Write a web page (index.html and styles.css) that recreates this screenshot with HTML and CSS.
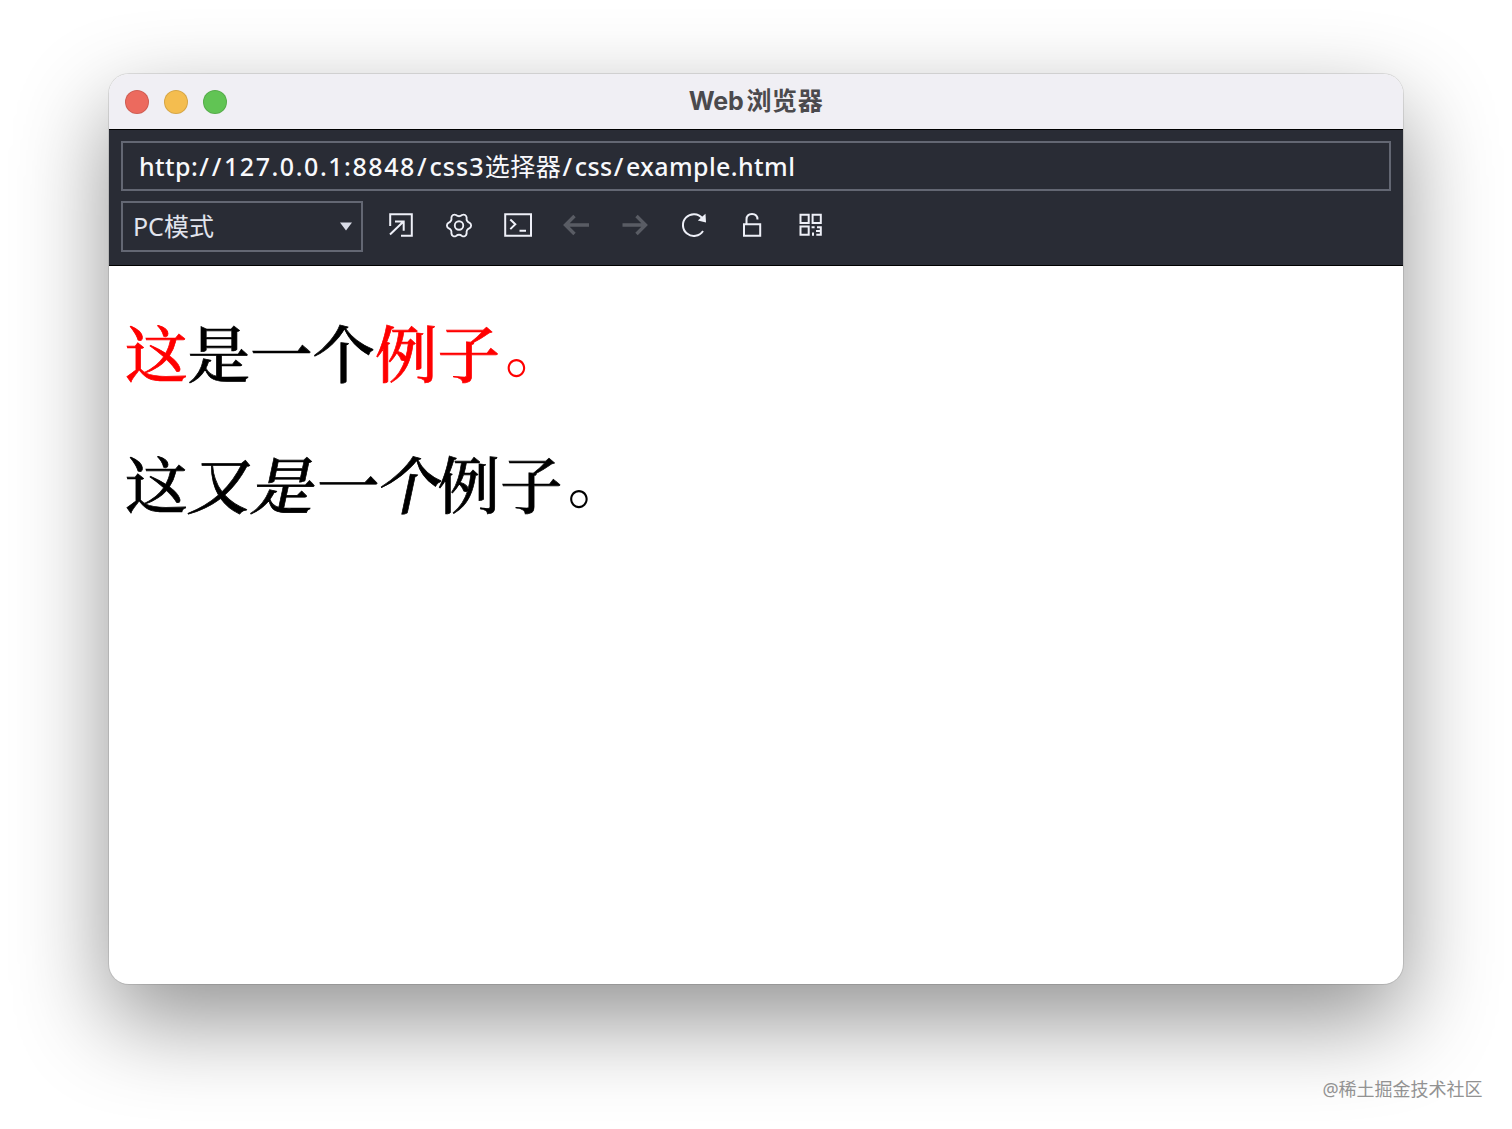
FILE: index.html
```html
<!DOCTYPE html>
<html lang="zh-CN">
<head>
<meta charset="utf-8">
<title>Web浏览器</title>
<link rel="stylesheet" href="styles.css">
</head>
<body>
<main class="window">
  <header class="titlebar">
    <div class="lights"><i class="light red"></i><i class="light yellow"></i><i class="light green"></i></div>
    <h1 class="title"><span class="latin">Web</span>浏览器</h1>
  </header>
  <section class="toolbar">
    <div class="address"><span class="url">http:</span><span class="slash">//</span><span class="digits">127.0.0.1:8848</span><span class="slash">/</span><span class="url host">css3</span><span class="url-cjk">选择器</span><span class="slash">/</span><span class="url">css</span><span class="slash">/</span><span class="url">example.html</span></div>
    <div class="controls">
      <div class="mode"><span class="mode-label">PC模式</span><svg class="caret" viewBox="0 0 12 9"><path d="M0 0.5h12L6 8.5z"/></svg></div>
      <svg class="icon" viewBox="0 0 32 32"><path d="M5.2 16V4.2h21.6v21.6H16"/><path d="M5 24.5L18.5 11.5M10 11.5h8.7v9.3"/></svg>
      <svg class="icon" viewBox="0 0 32 32"><g transform="translate(1.3 1.24) scale(.92)"><path d="M27.55 12.62A3.4 3.4 0 0 1 27.55 18.38Q23.62 19.9 24.27 24.06A3.4 3.4 0 0 1 19.28 26.94Q16 24.3 12.72 26.94A3.4 3.4 0 0 1 7.73 24.06Q8.38 19.9 4.45 18.38A3.4 3.4 0 0 1 4.45 12.62Q8.38 11.1 7.73 6.94A3.4 3.4 0 0 1 12.72 4.06Q16 6.7 19.28 4.06A3.4 3.4 0 0 1 24.27 6.94Q23.62 11.1 27.55 12.62Z"/><circle cx="16" cy="15.5" r="4.6"/></g></svg>
      <svg class="icon" viewBox="0 0 32 32"><path d="M3.2 4.2h25.8v21.6H3.2zM8.3 9.5l5 4.8-5 4.8M17.5 20.8H24"/></svg>
      <svg class="icon off" viewBox="0 0 32 32"><path d="M29 15H6M14.5 6L5.5 15l9 9"/></svg>
      <svg class="icon off" viewBox="0 0 32 32"><path d="M3.5 15H26.5M17.5 6l9 9-9 9"/></svg>
      <svg class="icon" viewBox="0 0 32 32"><path d="M24.3 8.2A10.9 10.9 0 1 0 25 21"/><path class="solid" d="M27.5 3.8l.5 8.7-8.2-2z"/></svg>
      <svg class="icon" viewBox="0 0 32 32"><path d="M8 14.2h16.2v11.6H8zM10.5 14V9.5C10.5 6 12.7 4 16 4s5.5 2 5.5 5.5"/></svg>
      <svg class="icon" viewBox="0 0 32 32"><path d="M5.5 4.7h8.2v8.2H5.5zM17.6 4.7h8.2v8.2h-8.2zM5.5 16.6h8.2v8.2H5.5zM16.6 17.3h3M18 22.5v3.3M22 17.3h3.8v7.5h-4.5M21 21h4.5"/></svg>
    </div>
  </section>
  <article class="page">
    <p class="line"><span class="hot">这</span>是一个<span class="hot">例子<span class="stop">。</span></span></p>
    <p class="line">这<em class="slant"><i>又</i><i>是</i><i>一</i><i>个</i></em>例子<span class="stop">。</span></p>
  </article>
</main>
<footer class="credit">@稀土掘金技术社区</footer>
</body>
</html>
```
FILE: styles.css
```css
* { box-sizing: border-box; }
body {
  margin: 0;
  height: 1129px;
  padding: 74px 109.4px 0;
  overflow: hidden;
  display: flex;
  flex-direction: column;
  background: #fff;
  font-family: "Noto Sans", "Noto Sans CJK SC", sans-serif;
}
.window {
  height: 910px;
  flex: none;
  border-radius: 20px;
  overflow: hidden;
  background: #fff;
  box-shadow: 0 0 0 1px rgba(0,0,0,.1), 0 36px 92px rgba(0,0,0,.43);
}
.titlebar {
  height: 55px;
  padding: 0 15.6px;
  display: grid;
  grid-template-columns: 1fr auto 1fr;
  align-items: center;
  background: #f0eff4;
}
.lights { display: flex; gap: 15px; }
.light { width: 24px; height: 24px; border-radius: 50%; border: 1px solid rgba(0,0,0,.12); }
.red { background: #ec6a5e; }
.yellow { background: #f4bd4f; }
.green { background: #61c454; }
.title {
  margin: 0;
  padding-bottom: 2px;
  color: #4b4a4d;
  font: 700 25px/50px "Inter", "Noto Sans CJK SC", sans-serif;
  letter-spacing: .6px;
}
.latin { margin-right: 3px; letter-spacing: -.2px; }
.toolbar {
  height: 137px;
  padding: 11px 12px 0 11.6px;
  background: #292c35;
  border-top: 1px solid #000;
  border-bottom: 1px solid #000;
}
.address {
  height: 50px;
  padding-left: 16px;
  border: 2px solid #636773;
  color: #f8f9fc;
  font-size: 25px;
  font-weight: 500;
  line-height: 45px;
  white-space: nowrap;
}
.url { letter-spacing: .4px; }
.host { letter-spacing: 1.1px; }
.digits { letter-spacing: 1.55px; }
.slash { margin-left: 1.2px; letter-spacing: 2.7px; }
.url-cjk { letter-spacing: .5px; font-family: "Noto Sans CJK SC", sans-serif; font-weight: 400; }
.controls { margin-top: 10px; display: flex; gap: 26.6px; }
.mode {
  width: 242px;
  height: 51px;
  margin-right: -5px;
  padding: 0 9px 0 10px;
  display: flex;
  align-items: center;
  justify-content: space-between;
  border: 2px solid #636773;
  color: #e1e4ed;
  font-size: 25px;
  line-height: 46px;
}
.mode-label { padding-bottom: 2px; }
.caret { width: 12px; height: 9px; fill: #d9dce7; }
.icon { width: 32px; height: 32px; margin-top: 9px; flex: none; fill: none; stroke: #eef0f8; stroke-width: 2; }
.off { stroke: #595c64; stroke-width: 3.4; }
.solid { fill: #eef0f8; stroke: none; }
.page { padding: 40px 15.6px; }
.line {
  margin: 0 0 41px;
  color: #000;
  font: 500 62.5px/90px "Songti SC", "Noto Serif CJK SC", "Noto Sans CJK SC", serif;
  -webkit-text-stroke: .7px currentColor;
}
.hot { color: #f00; }
.stop { padding-left: 5px; line-height: 0; vertical-align: 6px; -webkit-text-stroke: 0; }
.slant { font-style: normal; }
.slant i { display: inline-block; font-style: normal; transform: skewX(-12deg); transform-origin: 50% 78%; }
.credit {
  margin: 91px -80px 0 0;
  align-self: flex-end;
  color: #929292;
  font-size: 18px;
  line-height: 28px;
}
```
